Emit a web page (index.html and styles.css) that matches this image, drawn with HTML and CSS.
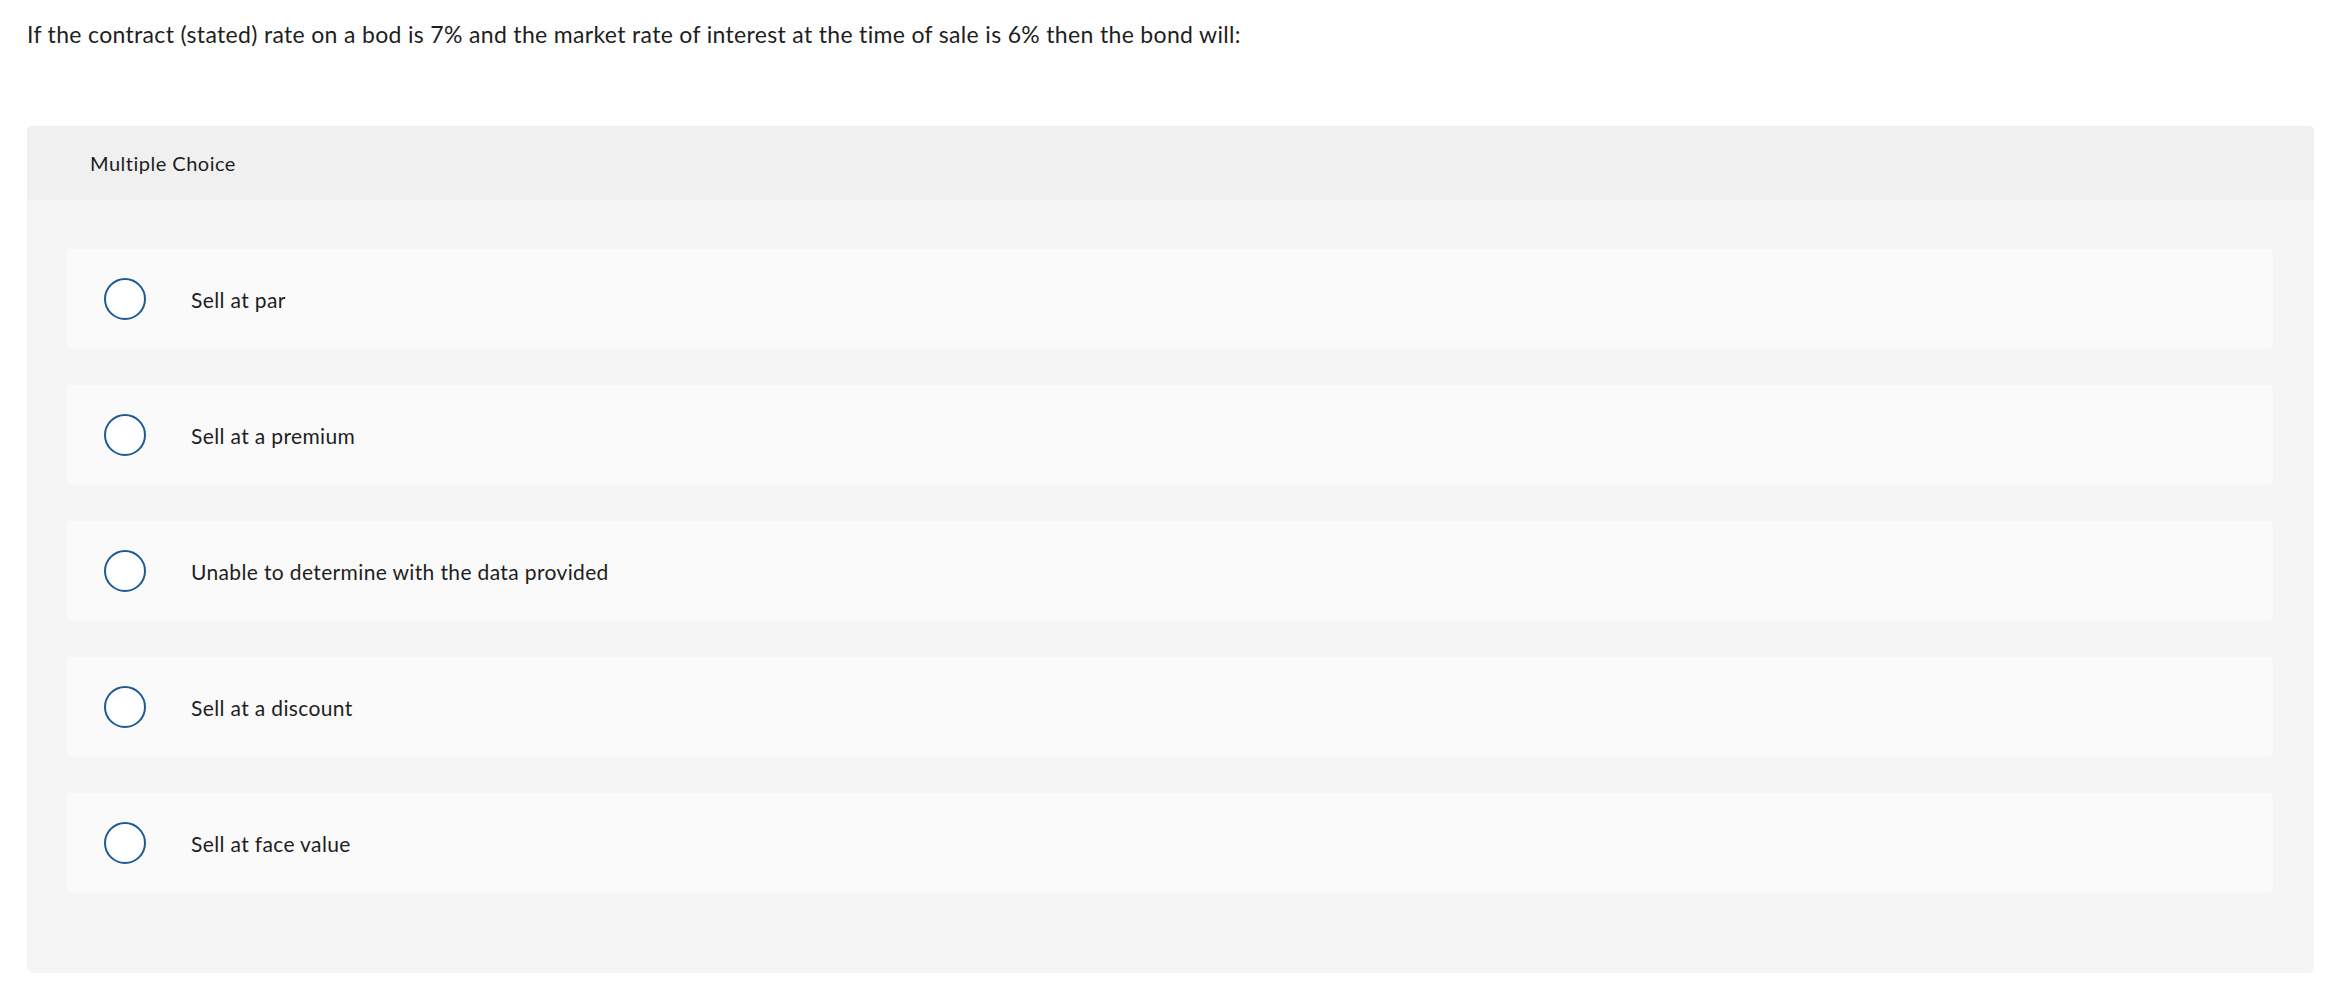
FILE: index.html
```html
<!DOCTYPE html>
<html lang="en">
<head>
<meta charset="utf-8">
<title>Multiple Choice</title>
<link rel="stylesheet" href="styles.css">
</head>
<body>
<p class="question">If the contract (stated) rate on a bod is 7% and the market rate of interest at the time of sale is 6% then the bond will:</p>
<section class="panel">
  <header class="panel-head">Multiple Choice</header>
  <div class="panel-body">
    <label class="option"><span class="radio"></span><span class="opt-text">Sell at par</span></label>
    <label class="option"><span class="radio"></span><span class="opt-text">Sell at a premium</span></label>
    <label class="option"><span class="radio"></span><span class="opt-text">Unable to determine with the data provided</span></label>
    <label class="option"><span class="radio"></span><span class="opt-text">Sell at a discount</span></label>
    <label class="option"><span class="radio"></span><span class="opt-text">Sell at face value</span></label>
  </div>
</section>
</body>
</html>
```
FILE: styles.css
```css
html, body {
  margin: 0;
  padding: 0;
  background: #ffffff;
}
body {
  font-family: "Lato", "Liberation Sans", sans-serif;
  font-variant-ligatures: none;
  color: #1e1e1e;
  padding: 0 28px 0 27px;
}
.question {
  margin: 0;
  padding-top: 20px;
  height: 126px;
  box-sizing: border-box;
  font-size: 23px;
  letter-spacing: 0.33px;
  line-height: 28px;
}
.panel {
  background: #f5f5f5;
  border-radius: 5px;
}
.panel-head {
  background: #f0f0f0;
  border-radius: 5px 5px 0 0;
  height: 74px;
  display: flex;
  align-items: center;
  padding-left: 63px;
  font-size: 20px;
  letter-spacing: 0.5px;
}
.panel-body {
  display: flex;
  flex-direction: column;
  gap: 36px;
  padding: 49px 41px 80px 39px;
}
.option {
  background: #fafafa;
  border-radius: 5px;
  height: 100px;
  display: flex;
  align-items: center;
  padding-left: 38px;
}
.radio {
  width: 38px;
  height: 38px;
  border: 2px solid #1b5a94;
  border-radius: 50%;
  background: #ffffff;
  flex: none;
}
.opt-text {
  margin-left: 45px;
  font-size: 21px;
  letter-spacing: 0.36px;
}
```
